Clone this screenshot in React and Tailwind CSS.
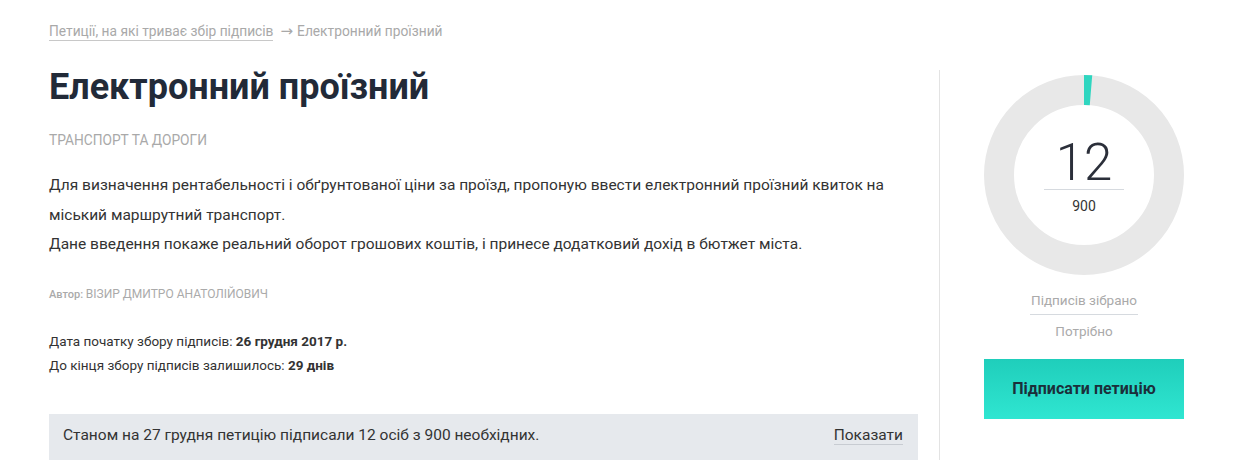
import React from "react";

function Donut() {
  const r = 85;
  const c = 2 * Math.PI * r;
  const part = (12 / 900) * c;
  return (
    <div className="relative w-[200px] h-[200px]">
      <svg width="200" height="200" viewBox="0 0 200 200" className="block">
        <circle cx="100" cy="100" r={r} fill="none" stroke="#e8e8e8" strokeWidth="30" />
        <circle
          cx="100"
          cy="100"
          r={r}
          fill="none"
          stroke="#2fd6c0"
          strokeWidth="30"
          strokeDasharray={`${part} ${c}`}
          transform="rotate(-90 100 100)"
        />
      </svg>
      <div className="absolute inset-0 flex flex-col items-center justify-center">
        <div className="text-[51px] leading-[56px] font-light text-[#2b2f3a]">12</div>
        <div className="w-[80px] h-px bg-[#d6dadf] mt-[-2px]"></div>
        <div className="text-[14px] leading-[20px] text-[#333] mt-[6px]">900</div>
      </div>
    </div>
  );
}

export default function App() {
  return (
    <div
      className="w-[1242px] h-[460px] overflow-hidden bg-white flex"
      style={{ fontFamily: "Roboto, 'Liberation Sans', sans-serif" }}
    >
      <div className="w-[869px] ml-[49px] shrink-0 flex flex-col">
        <div className="pt-[22px] text-[13.75px] leading-[18px] text-[#a9a9a9] flex items-baseline">
          <span className="border-b border-[#c8c8c8]">Петиції, на які триває збір підписів</span>
          <span
            className="text-[15px] ml-[7px] mr-[4px]"
            style={{ fontFamily: "'DejaVu Sans', sans-serif" }}
          >
            →
          </span>
          <span>Електронний проїзний</span>
        </div>
        <h1 className="mt-[25px] text-[36px] leading-[42px] font-bold text-[#222a38]">
          Електронний проїзний
        </h1>
        <div className="mt-[23px] text-[13.75px] leading-[18px] text-[#a9a9a9] uppercase">
          Транспорт та дороги
        </div>
        <div className="mt-[22px] text-[15.5px] leading-[29.5px] text-[#333]">
          <p>
            Для визначення рентабельності і обґрунтованої ціни за проїзд, пропоную ввести електронний проїзний квиток на
            міський маршрутний транспорт.
          </p>
          <p>Дане введення покаже реальний оборот грошових коштів, і принесе додатковий дохід в бютжет міста.</p>
        </div>
        <div className="mt-[26px] text-[12px] leading-[16px] text-[#aaa] uppercase">
          <span className="text-[11px] font-medium normal-case">Автор: </span>
          ВІЗИР ДМИТРО АНАТОЛІЙОВИЧ
        </div>
        <div className="mt-[26px] text-[13.5px] leading-[24px] text-[#333]">
          <div>
            Дата початку збору підписів: <b className="font-bold">26 грудня 2017 р.</b>
          </div>
          <div>
            До кінця збору підписів залишилось: <b className="font-bold">29 днів</b>
          </div>
        </div>
        <div className="mt-[37px] bg-[#e6e9ed] h-[54px] pl-[14px] pr-[15px] flex items-center justify-between text-[15.5px] text-[#333]">
          <span className="mt-[-2px]">Станом на 27 грудня петицію підписали 12 осіб з 900 необхідних.</span>
          <span className="mt-[-2px] border-b border-[#c8ccd2] leading-[18px]">Показати</span>
        </div>
      </div>
      <div className="ml-[21px] mt-[70px] w-px bg-[#e3e3e3] shrink-0"></div>
      <div className="w-[288px] shrink-0 flex flex-col items-center pt-[75px]">
        <Donut />
        <div className="mt-[16px] text-[13.5px] leading-[18px] text-[#aaa] pb-[5px] border-b border-[#d6dadf] w-[108px] text-center">
          Підписів зібрано
        </div>
        <div className="mt-[7px] text-[13.5px] leading-[18px] text-[#aaa]">Потрібно</div>
        <button className="mt-[19px] w-[200px] h-[60px] bg-gradient-to-b from-[#1fcebb] to-[#2fe6d1] text-[16px] font-bold text-[#1b2f3a]">
          Підписати петицію
        </button>
      </div>
    </div>
  );
}
